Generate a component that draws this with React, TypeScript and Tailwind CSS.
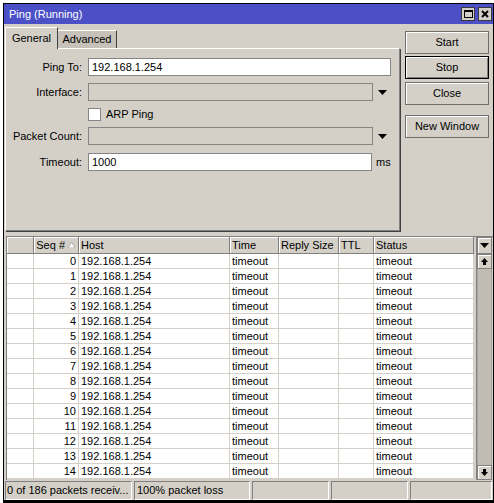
import React from "react";

const font = "font-['Liberation_Sans',Arial,sans-serif]";

const DownTri = () => (
    <svg width="9" height="5" viewBox="0 0 9 5">
        <path d="M0 0h9L4.5 5z" fill="#000" />
    </svg>
);

const UpArrow = () => (
    <svg width="7" height="7" viewBox="0 0 7 7">
        <path d="M3.5 0L7 4H0z M2 4h3v3H2z" fill="#000" />
    </svg>
);

const DownArrow = () => (
    <svg width="7" height="7" viewBox="0 0 7 7">
        <path d="M3.5 7L7 3H0z M2 0h3v3H2z" fill="#000" />
    </svg>
);

const Field = ({
    label,
    value,
    disabled,
    width,
    after,
    className,
}: {
    label: string;
    value?: string;
    disabled?: boolean;
    width: string;
    after?: React.ReactNode;
    className?: string;
}) => (
    <div className={"flex items-center h-[18px] " + (className ?? "")}>
        <div className="w-[76px] text-right whitespace-nowrap">{label}</div>
        <div
            className={
                "ml-[6px] h-[18px] border border-[#858585] flex items-center pl-[3px] " +
                width +
                (disabled ? " bg-[#d4d0c8]" : " bg-white")
            }
        >
            {value}
        </div>
        {after}
    </div>
);

const WinButton = ({ label, def, className }: { label: string; def?: boolean; className?: string }) => (
    <div
        className={
            "h-[23px] w-[84px] flex items-center justify-center bg-[#d4d0c8] " +
            (def
                ? "border border-black shadow-[inset_1px_1px_0_#fff,inset_-1px_-1px_0_#808080]"
                : "border border-[#6f6f6f] shadow-[inset_1px_1px_0_#fff]") +
            " " +
            (className ?? "")
        }
    >
        {label}
    </div>
);

const columns = [
    { title: "", w: "w-[27px]" },
    { title: "Seq #", w: "w-[45px]" },
    { title: "Host", w: "w-[151px]" },
    { title: "Time", w: "w-[49px]" },
    { title: "Reply Size", w: "w-[60px]" },
    { title: "TTL", w: "w-[35px]" },
    { title: "Status", w: "w-[100px]" },
];

const rows = Array.from({ length: 15 }, (_, i) => i);

const App = () => {
    return (
        <div className={"w-[494px] h-[503px] bg-white overflow-hidden pl-[3px] pt-[3px] text-[11px] text-black " + font}>
            <div className="w-[491px] h-[500px] border border-black border-b-[3px] border-r-[1px] flex flex-col">
                {/* title bar */}
                <div className="h-[20px] bg-[#4b50c7] flex items-center justify-between pl-[5px] pr-[1px]">
                    <span className="text-white">Ping (Running)</span>
                    <div className="flex gap-[3px]">
                        <div className="w-[14px] h-[14px] bg-[#d4d0c8] border border-[#3a3a3a] flex items-center justify-center">
                            <div className="w-[9px] h-[8px] border border-black border-t-2" />
                        </div>
                        <div className="w-[14px] h-[14px] bg-[#d4d0c8] border border-[#3a3a3a] flex items-center justify-center">
                            <svg width="8" height="8" viewBox="0 0 8 8">
                                <path d="M1 1L7 7M7 1L1 7" stroke="#000" strokeWidth="2" />
                            </svg>
                        </div>
                    </div>
                </div>

                <div className="flex-1 bg-[#d4d0c8] flex flex-col">
                    {/* top part */}
                    <div className="flex items-start h-[212px]">
                        <div className="ml-[1px] mt-[2px] flex flex-col">
                            <div className="flex items-end h-[22px]">
                                <div className="h-[22px] w-[53px] border-l border-t border-white border-r border-r-[#404040] flex items-center justify-center relative z-10 bg-[#d4d0c8] -mb-[1px]">
                                    General
                                </div>
                                <div className="h-[18px] w-[59px] bg-[#c6c2ba] border-t border-white border-r border-r-[#404040] flex items-center justify-center">
                                    Advanced
                                </div>
                            </div>
                            <div className="w-[395px] h-[183px] border-l border-t border-white border-r border-b border-r-[#808080] border-b-[#808080] shadow-[1px_1px_0_#404040]">
                                <Field label="Ping To:" value="192.168.1.254" width="w-[303px]" className="mt-[9px]" />
                                <Field
                                    label="Interface:"
                                    disabled
                                    width="w-[285px]"
                                    className="mt-[7px]"
                                    after={
                                        <div className="ml-[5px]">
                                            <DownTri />
                                        </div>
                                    }
                                />
                                <div className="flex items-center mt-[7px] h-[13px] pl-[82px]">
                                    <div className="w-[13px] h-[13px] bg-white border border-[#858585]" />
                                    <span className="ml-[5px]">ARP Ping</span>
                                </div>
                                <Field
                                    label="Packet Count:"
                                    disabled
                                    width="w-[285px]"
                                    className="mt-[6px]"
                                    after={
                                        <div className="ml-[5px]">
                                            <DownTri />
                                        </div>
                                    }
                                />
                                <Field
                                    label="Timeout:"
                                    value="1000"
                                    width="w-[284px]"
                                    className="mt-[8px]"
                                    after={<span className="ml-[4px]">ms</span>}
                                />
                            </div>
                        </div>
                        <div className="ml-[5px] mt-[7px] flex flex-col">
                            <WinButton label="Start" />
                            <WinButton label="Stop" def className="mt-[2px]" />
                            <WinButton label="Close" className="mt-[3px]" />
                            <WinButton label="New Window" className="mt-[10px]" />
                        </div>
                    </div>

                    {/* table */}
                    <div className="ml-[2px] h-[244px] border-l border-t border-[#808080] flex">
                        <div className="flex flex-col">
                            <div className="flex h-[17px] border-b border-[#808080]">
                                {columns.map((c, i) => (
                                    <div
                                        key={i}
                                        className={
                                            c.w +
                                            " h-full border-r border-[#808080] shadow-[inset_1px_1px_0_#fff] flex items-center pl-[2px] " +
                                            (i === 1 ? "justify-end pr-[3px]" : "")
                                        }
                                    >
                                        {c.title}
                                        {i === 1 && (
                                            <svg className="ml-[3px]" width="7" height="6" viewBox="0 0 7 6">
                                                <path d="M3.5 0L7 6H0z" fill="#fff" stroke="#a0a0a0" strokeWidth="0.8" />
                                            </svg>
                                        )}
                                    </div>
                                ))}
                            </div>
                            {rows.map((r) => (
                                <div key={r} className="flex h-[15px] bg-white">
                                    {columns.map((c, i) => (
                                        <div
                                            key={i}
                                            className={
                                                c.w +
                                                " h-full border-r border-b border-[#d4d0c8] flex items-center whitespace-nowrap " +
                                                (i === 1 ? "justify-end pr-[2px]" : "pl-[2px]")
                                            }
                                        >
                                            {i === 1 && r}
                                            {i === 2 && "192.168.1.254"}
                                            {(i === 3 || i === 6) && "timeout"}
                                        </div>
                                    ))}
                                </div>
                            ))}
                        </div>
                        <div className="ml-[2px] w-[16px] flex flex-col border-l border-[#808080]">
                            <div className="h-[17px] border border-[#808080] shadow-[inset_1px_1px_0_#fff] flex items-center justify-center">
                                <svg width="9" height="5" viewBox="0 0 9 5">
                                    <path d="M0 0h9L4.5 5z" fill="#000" />
                                </svg>
                            </div>
                            <div className="h-[15px] border border-[#808080] shadow-[inset_1px_1px_0_#fff] flex items-center justify-center bg-[#d4d0c8]">
                                <UpArrow />
                            </div>
                            <div className="flex-1 bg-[#c0bcb4] border-x border-[#a8a49c]" />
                            <div className="h-[15px] border border-[#808080] shadow-[inset_1px_1px_0_#fff] flex items-center justify-center bg-[#d4d0c8]">
                                <DownArrow />
                            </div>
                        </div>
                    </div>

                    {/* status bar */}
                    <div className="flex gap-[2px] pl-[1px] pr-[1px] h-[20px] pt-[1px]">
                        <div className="w-[127px] h-[19px] border-t border-l border-[#808080] border-b border-r border-b-white border-r-white flex items-center pl-[1px] whitespace-nowrap">
                            0 of 186 packets receiv...
                        </div>
                        <div className="w-[116px] h-[19px] border-t border-l border-[#808080] border-b border-r border-b-white border-r-white flex items-center pl-[2px] whitespace-nowrap">
                            100% packet loss
                        </div>
                        <div className="w-[77px] h-[19px] border-t border-l border-[#808080] border-b border-r border-b-white border-r-white" />
                        <div className="w-[77px] h-[19px] border-t border-l border-[#808080] border-b border-r border-b-white border-r-white" />
                        <div className="flex-1 h-[19px] border-t border-l border-[#808080] border-b border-r border-b-white border-r-white" />
                    </div>
                </div>
            </div>
        </div>
    );
};

export default App;
